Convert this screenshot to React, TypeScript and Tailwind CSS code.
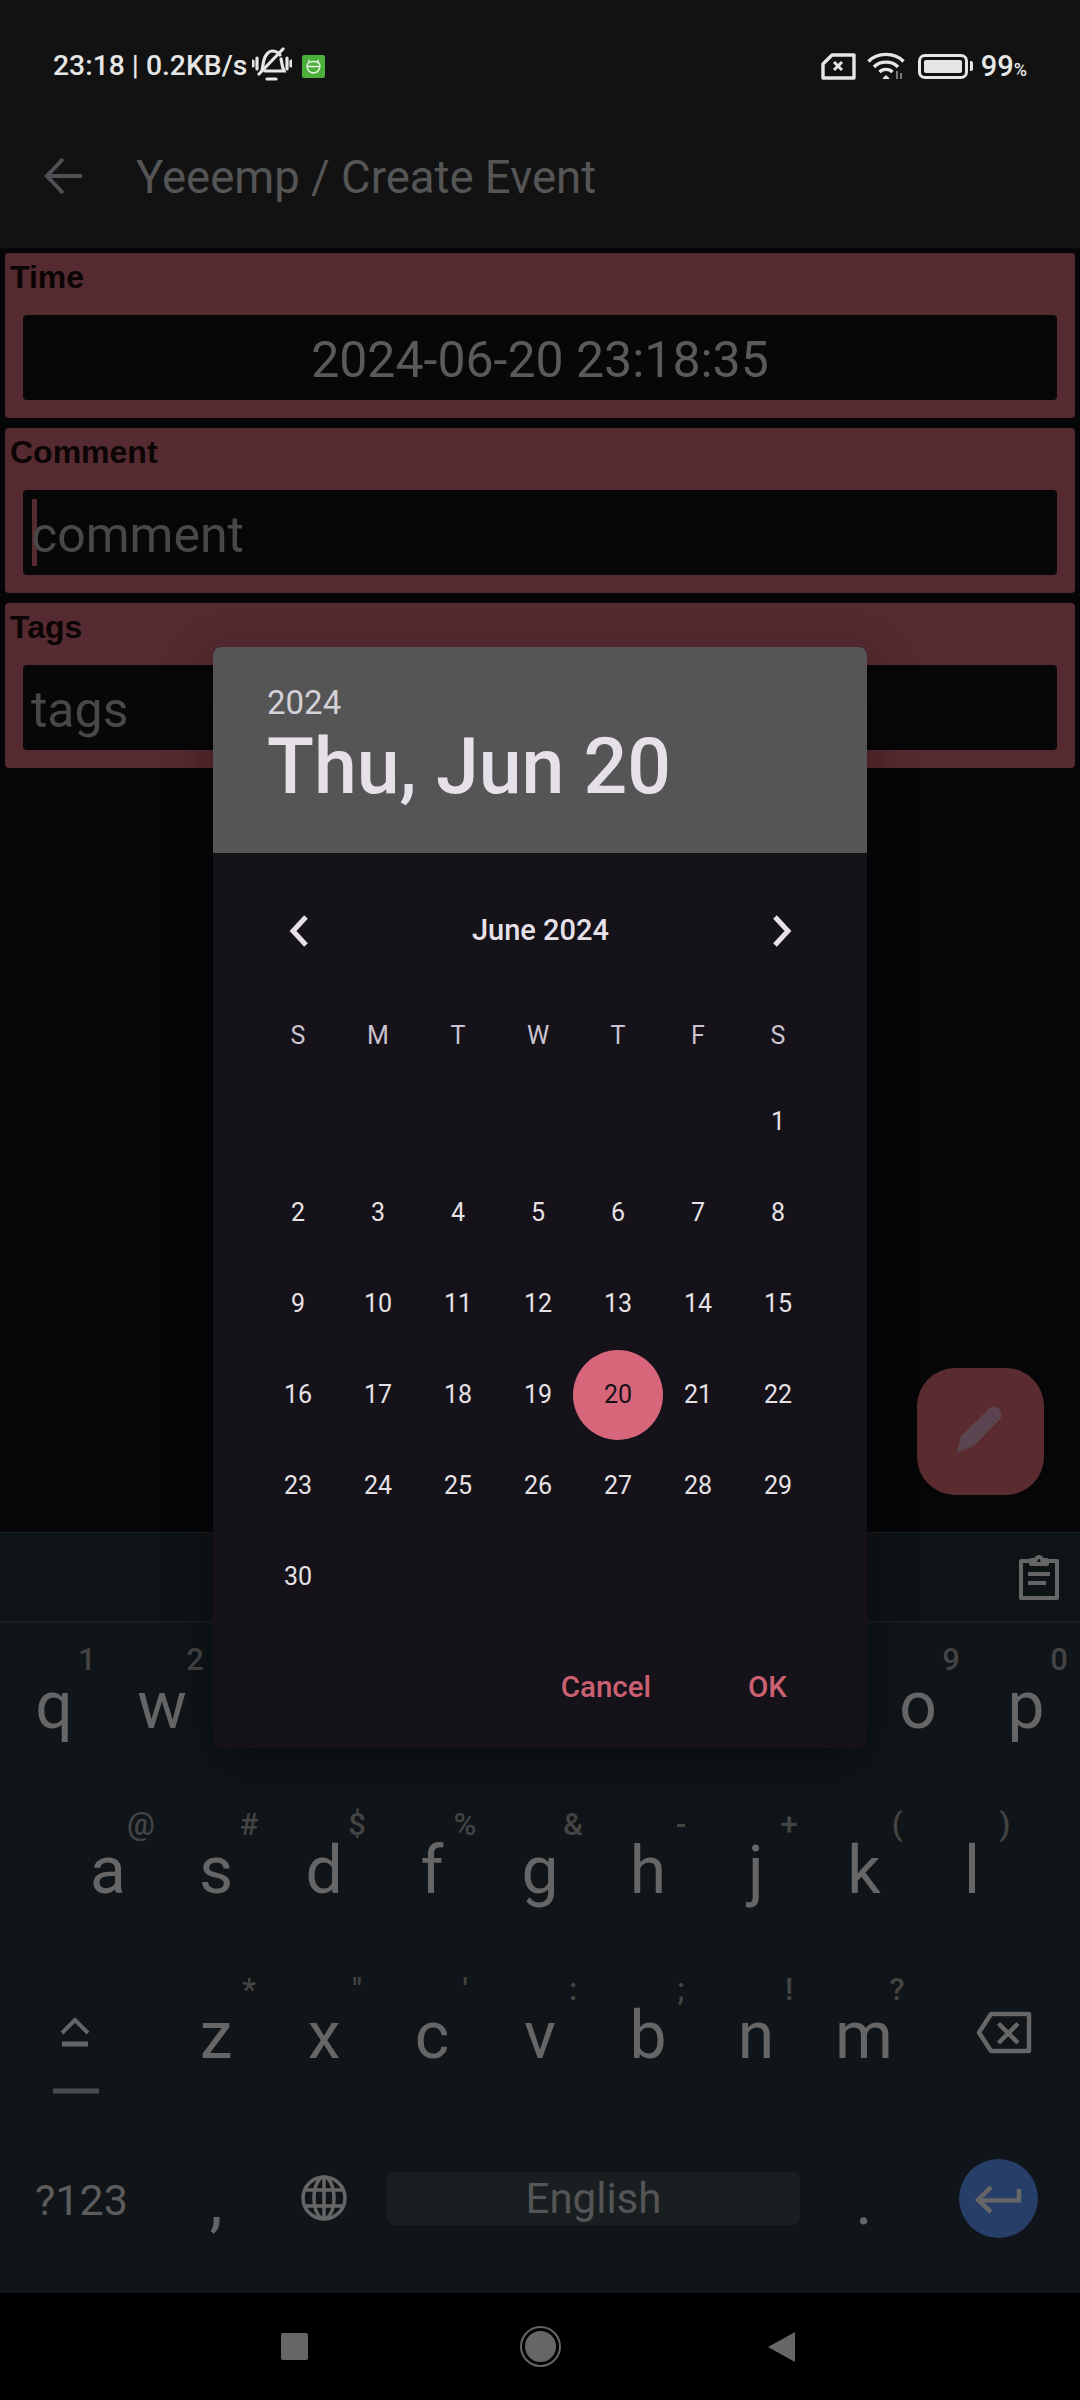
// the dialog covers e r t y u i, so those cells stay empty
const rowOne = [
  ["q", "1"], ["w", "2"], ["", ""], ["", ""], ["", ""],
  ["", ""], ["", ""], ["", ""], ["o", "9"], ["p", "0"],
];
const rowTwo = [
  ["a", "@"], ["s", "#"], ["d", "$"], ["f", "%"], ["g", "&"],
  ["h", "-"], ["j", "+"], ["k", "("], ["l", ")"],
];
const rowThree = [
  ["z", "*"], ["x", '"'], ["c", "'"], ["v", ":"], ["b", ";"], ["n", "!"], ["m", "?"],
];
const weekdays = ["S", "M", "T", "W", "T", "F", "S"];
const days = Array.from({ length: 36 }, (_, i) => (i < 6 ? 0 : i - 5));

function Key({ label, hint }: { label: string; hint: string }) {
  return (
    <div className="relative flex h-[165px] w-[108px] items-center justify-center text-[66px] leading-none text-[#666]">
      {label}
      <span className="absolute left-[71px] top-[21px] w-[32px] text-center text-[31px] font-medium leading-none text-[#444]">
        {hint}
      </span>
    </div>
  );
}

function StatusBar() {
  return (
    <div className="flex h-[132px] items-center pl-[53px] pr-[53px] text-[#e6e6e6]">
      <span className="text-[28.3px] font-medium leading-none">23:18 | 0.2KB/s</span>
      <svg className="ml-[5px]" width="40" height="40" viewBox="0 0 40 40" fill="none" stroke="#e6e6e6" strokeWidth="3.2" strokeLinecap="round">
        <path d="M10 24c1-3 1-7 2-10 1-5 5-9 8-9 3 0 6 1 8 4M29 13c1 4 1 8 3 12H13" />
        <path d="M7 28 31 3M5 12v11M1 15v5M35 12v11M39 15v5M15 33h9" />
      </svg>
      <div className="ml-[10px] flex h-[23px] w-[23px] items-center justify-center rounded-[2px] bg-[#4caf3c]">
        <svg width="17" height="15" viewBox="0 0 17 15" fill="none" stroke="#e8f5e4" strokeWidth="1.3">
          <path d="M4 2.5 3.5.8M13 2.5 13.5.8M2 7c0-3 3-4.5 6.5-4.5S15 4 15 7c0 4-3 7-6.5 7S2 11 2 7ZM2 7.5h13" />
        </svg>
      </div>
      <div className="ml-auto flex items-center">
        <svg width="35" height="27" viewBox="0 0 35 27" fill="none" stroke="#e6e6e6" strokeWidth="3.4" strokeLinejoin="round">
          <path d="M11 2h22v23H2V11Z" />
          <path d="M13 9 21 17M21 9 13 17" strokeWidth="3" />
        </svg>
        <svg className="ml-[11px]" width="38" height="28" viewBox="0 0 38 28" fill="none" stroke="#e6e6e6" strokeWidth="3.4">
          <path d="M1.5 9.5C10 0 28 0 36.5 9.5M7 15c6-6.500 18-6.500 24 0M12.500 20c3.500-3.500 9.500-3.500 13 0" />
          <path d="M19 23.500 16 26.500h6Z" fill="#e6e6e6" strokeWidth="1" />
          <path d="M30 19v8M34 21v6" stroke="#777" strokeWidth="2" />
        </svg>
        <div className="ml-[13px] flex h-[25px] w-[50px] items-center rounded-[7px] border-[3px] border-[#e6e6e6] p-[3px]">
          <div className="h-full w-full rounded-[2px] bg-[#e6e6e6]" />
        </div>
        <div className="ml-[2px] h-[10px] w-[3px] rounded-r-[2px] bg-[#e6e6e6]" />
        <span className="ml-[8px] text-[29px] font-medium leading-none">
          99<span className="text-[18px]">%</span>
        </span>
      </div>
    </div>
  );
}

function Field({ label, children }: { label: string; children: React.ReactNode }) {
  return (
    <section className="h-[165px] rounded-[4px] bg-[#552a30] px-[18px]">
      <div className="-ml-[13px] flex h-[62px] items-start pt-[6px] font-['Liberation_Sans',sans-serif] text-[32px] font-bold leading-[36px] text-[#0c0506]">
        {label}
      </div>
      <div className="relative flex h-[85px] items-center rounded-[4px] bg-[#070707] px-[8px] text-[50px] leading-none text-[#484848]">
        {children}
      </div>
    </section>
  );
}

function DatePicker() {
  return (
    <div className="absolute left-[213px] top-[647px] h-[1101px] w-[654px] overflow-hidden rounded-[8px] bg-[#15121a] shadow-[0_16px_48px_rgba(0,0,0,0.35)]">
      <div className="h-[206px] bg-[#555555] pl-[54px] pt-[36px] text-[#e6e1e9]">
        <div className="text-[33px] leading-[40px] text-[#d4d0d8]">2024</div>
        <div className="text-[77px] font-medium leading-[88px]">Thu, Jun 20</div>
      </div>
      <div className="pl-[45px] pr-[49px] pt-[38px]">
        <div className="flex h-[80px] items-center justify-between text-[#e6e1e9]">
          <svg className="ml-[26px]" width="28" height="36" viewBox="0 0 28 36" fill="none" stroke="#e6e1e9" strokeWidth="5">
            <path d="M22 4 9 18l13 14" />
          </svg>
          <span className="text-[29px] font-medium">June 2024</span>
          <svg className="mr-[21px]" width="28" height="36" viewBox="0 0 28 36" fill="none" stroke="#e6e1e9" strokeWidth="5">
            <path d="M6 4l13 14L6 32" />
          </svg>
        </div>
        <div className="mt-[35px] grid h-[60px] grid-cols-7 items-center text-center text-[25px] text-[#cac4d0]">
          {weekdays.map((d, i) => (
            <span key={i}>{d}</span>
          ))}
        </div>
        <div className="mt-[10px] grid grid-cols-7 text-[25px] text-[#e6e1e5]">
          {days.map((d, i) => (
            <div key={i} className="flex h-[91px] items-center justify-center">
              {d === 20 ? (
                <span className="flex h-[90px] w-[90px] shrink-0 items-center justify-center rounded-full bg-[#d7667a] text-[#15121a]">
                  {d}
                </span>
              ) : (
                d > 0 && d
              )}
            </div>
          ))}
        </div>
        <div className="mt-[37px] flex h-[56px] items-center justify-end gap-[97px] pr-[31px] text-[29.5px] font-medium text-[#cc6073]">
          <span>Cancel</span>
          <span>OK</span>
        </div>
      </div>
    </div>
  );
}

function Keyboard() {
  return (
    <div className="h-[761px] border-t border-[#1a1f21] bg-[#0f1518]">
      <div className="flex h-[90px] items-center justify-end border-b-2 border-[#181d1f] bg-[#0e1315] pr-[20px]">
        <svg width="42" height="46" viewBox="0 0 42 46" fill="none" stroke="#666" strokeWidth="4" strokeLinejoin="round">
          <path d="M13 7H3v37h36V7H29" />
          <path d="M13 10V6h5a3 3 0 0 1 6 0h5v4Z" />
          <path d="M10 20h22M10 29h18" />
        </svg>
      </div>
      <div className="flex">
        {rowOne.map(([k, h], i) => (
          <Key key={i} label={k} hint={h} />
        ))}
      </div>
      <div className="flex justify-center">
        {rowTwo.map(([k, h]) => (
          <Key key={k} label={k} hint={h} />
        ))}
      </div>
      <div className="flex">
        <svg width="162" height="165" viewBox="0 0 162 165" fill="none" stroke="#666">
          <path d="M62 80 75 67l13 13" strokeWidth="4" />
          <path d="M62 91h26" strokeWidth="5" />
          <path d="M53 138h46" strokeWidth="5" stroke="#4a4a4a" />
        </svg>
        {rowThree.map(([k, h]) => (
          <Key key={k} label={k} hint={h} />
        ))}
        <svg width="162" height="165" viewBox="0 0 162 165" fill="none" stroke="#666" strokeWidth="4.5" strokeLinejoin="round">
          <path d="M61 79.500 73 61h38v37H73Z" />
          <path d="M80.500 70.500 100 90M100 70.500 80.500 90" />
        </svg>
      </div>
      <div className="flex h-[160px] items-center">
        <div className="flex w-[162px] justify-start pl-[35px] pt-[5px] text-[43px] leading-none text-[#5c5c5c]">?123</div>
        <div className="flex w-[108px] justify-center pt-[8px] text-[66px] leading-none text-[#666]">,</div>
        <div className="flex w-[108px] justify-center">
          <svg width="46" height="46" viewBox="0 0 46 46" fill="none" stroke="#666" strokeWidth="3.500">
            <circle cx="23" cy="23" r="21" />
            <ellipse cx="23" cy="23" rx="10" ry="21" />
            <path d="M5 15h36M5 31h36" />
            <path d="M23 2v42" />
          </svg>
        </div>
        <div className="ml-[9px] flex h-[53px] w-[413px] items-center justify-center rounded-[8px] bg-[#191e21] pt-[2px] text-[42px] leading-none text-[#555]">
          English
        </div>
        <div className="flex w-[128px] justify-center pt-[8px] text-[66px] leading-none text-[#666]">.</div>
        <div className="ml-[31px] flex h-[79px] w-[79px] items-center justify-center rounded-full bg-[#273f68]">
          <svg width="79" height="79" viewBox="0 0 79 79" fill="none" stroke="#666" strokeWidth="4.500">
            <path d="M19 41.500h41V30" />
            <path d="M32 28 19 41l13 12" />
          </svg>
        </div>
      </div>
    </div>
  );
}

export default function App() {
  return (
    <div className="relative flex h-[2400px] w-[1080px] flex-col overflow-hidden bg-[#060608] font-['Roboto',sans-serif]">
      <header className="h-[248px] shrink-0 bg-[#121212]">
        <StatusBar />
        <div className="flex h-[88px] items-center pl-[44px] text-[#555]">
          <svg width="40" height="38" viewBox="0 0 40 38" fill="none" stroke="#505055" strokeWidth="4">
            <path d="M38 19H4M19 2 3 19l16 17" />
          </svg>
          <span className="ml-[52px] pt-[3px] text-[45.5px] leading-none">Yeeemp / Create Event</span>
        </div>
      </header>
      <main className="flex flex-1 flex-col gap-[10px] px-[5px] pt-[5px]">
        <Field label="Time">
          <span className="w-full pt-[4px] text-center text-[#5a5a5a]">2024-06-20 23:18:35</span>
        </Field>
        <Field label="Comment">
          <span className="absolute left-[9px] top-[9px] h-[67px] w-[5px] bg-[#552a30]" />
          <span className="relative pt-[4px]">comment</span>
        </Field>
        <Field label="Tags">
          <span className="pt-[4px]">tags</span>
        </Field>
      </main>
      <div className="absolute left-[917px] top-[1368px] h-[127px] w-[127px] rounded-[38px] bg-[#5a2c30]">
        <svg width="127" height="127" viewBox="0 0 127 127" fill="#5c4450">
          <path d="M40 85 44 68 73 40c3-2 6-2 9 1 3 3 3 7 1 10L58 77Z" />
          <path d="M68 45 78 57M72 42 81 53" stroke="#523c47" strokeWidth="1" />
        </svg>
      </div>
      <Keyboard />
      <nav className="flex h-[107px] shrink-0 items-center bg-black pl-[281px]">
        <div className="h-[27px] w-[27px] rounded-[2px] bg-[#666]" />
        <div className="ml-[212px] flex h-[41px] w-[41px] items-center justify-center rounded-full border-2 border-[#666]">
          <div className="h-[31px] w-[31px] rounded-full bg-[#666]" />
        </div>
        <svg className="ml-[207px]" width="27" height="30" viewBox="0 0 27 30" fill="#666">
          <path d="M27 0v30L0 15Z" />
        </svg>
      </nav>
      <DatePicker />
    </div>
  );
}
